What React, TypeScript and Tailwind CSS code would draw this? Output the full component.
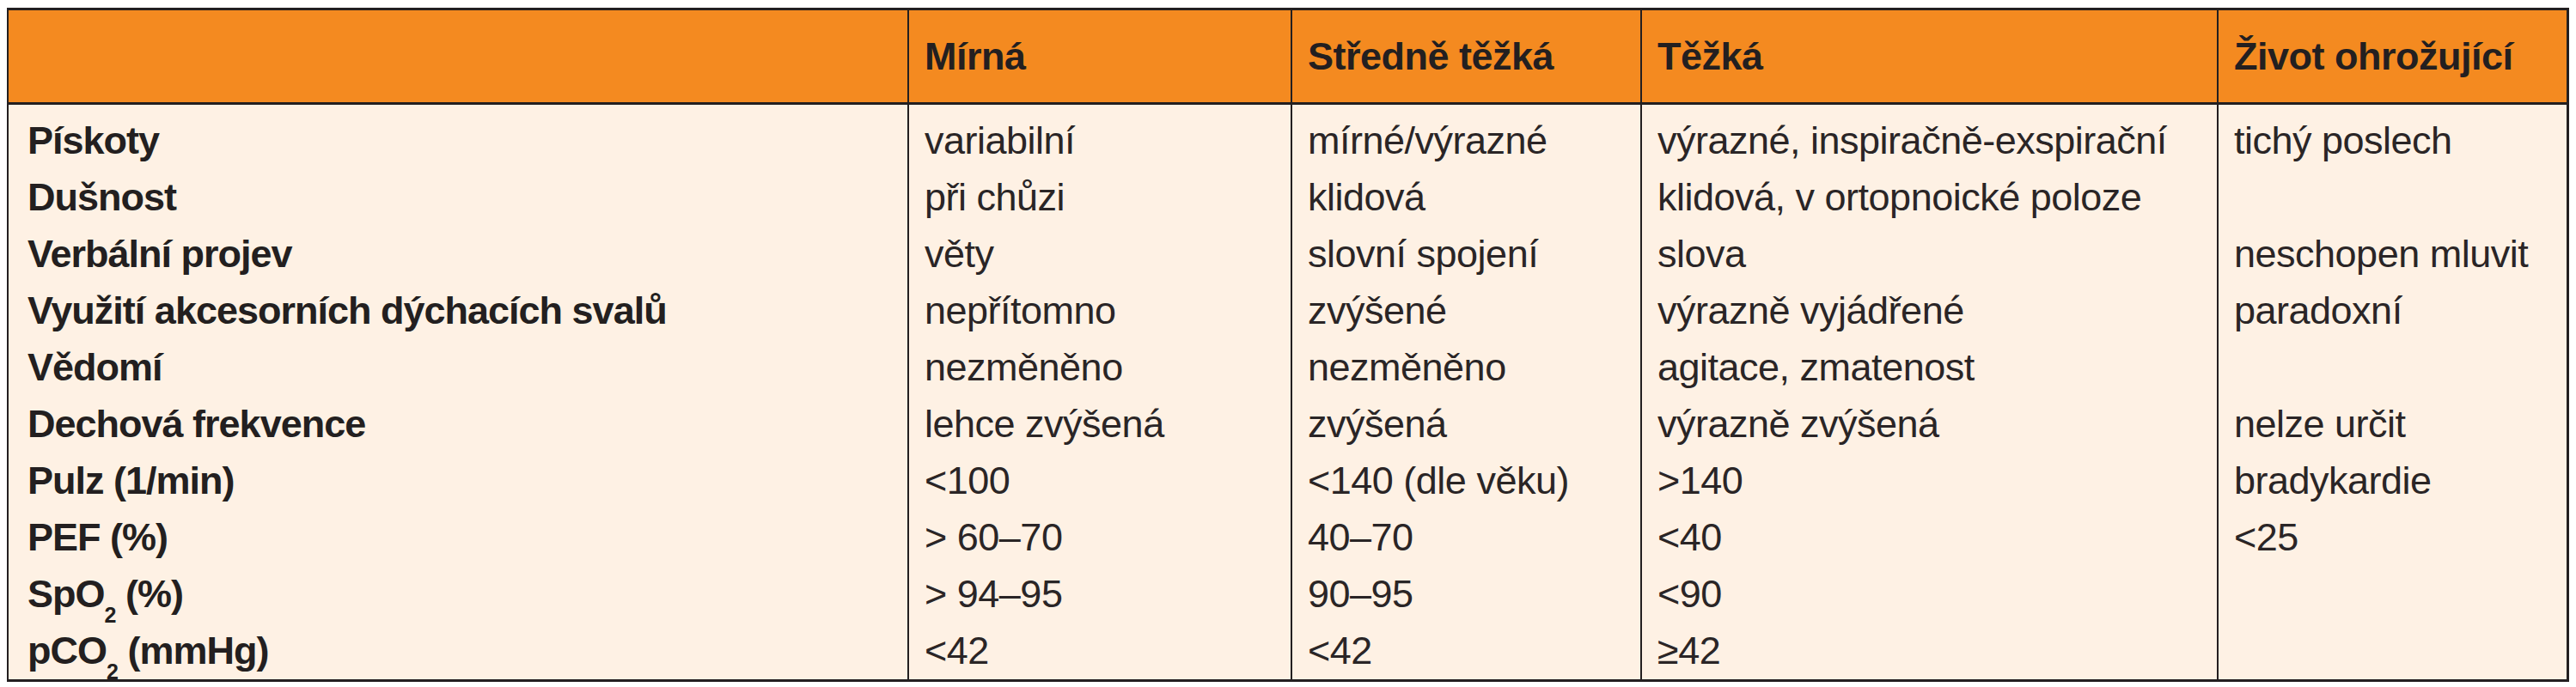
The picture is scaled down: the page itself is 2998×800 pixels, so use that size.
import React from "react";

type Row = { label: React.ReactNode; cells: string[] };

const Sub = ({ children }: { children: React.ReactNode }) => (
  <sub className="text-[25px] leading-none relative bottom-[-18px] align-baseline">{children}</sub>
);

const rows: Row[] = [
  { label: "Pískoty", cells: ["variabilní", "mírné/výrazné", "výrazné, inspiračně-exspirační", "tichý poslech"] },
  { label: "Dušnost", cells: ["při chůzi", "klidová", "klidová, v ortopnoické poloze", ""] },
  { label: "Verbální projev", cells: ["věty", "slovní spojení", "slova", "neschopen mluvit"] },
  { label: "Využití akcesorních dýchacích svalů", cells: ["nepřítomno", "zvýšené", "výrazně vyjádřené", "paradoxní"] },
  { label: "Vědomí", cells: ["nezměněno", "nezměněno", "agitace, zmatenost", ""] },
  { label: "Dechová frekvence", cells: ["lehce zvýšená", "zvýšená", "výrazně zvýšená", "nelze určit"] },
  { label: "Pulz (1/min)", cells: ["<100", "<140 (dle věku)", ">140", "bradykardie"] },
  { label: "PEF (%)", cells: ["> 60–70", "40–70", "<40", "<25"] },
  {
    label: (
      <>
        SpO<Sub>2</Sub> (%)
      </>
    ),
    cells: ["> 94–95", "90–95", "<90", ""],
  },
  {
    label: (
      <>
        pCO<Sub>2</Sub> (mmHg)
      </>
    ),
    cells: ["<42", "<42", "≥42", ""],
  },
];

const headers = ["Mírná", "Středně těžká", "Těžká", "Život ohrožující"];

const cols = "grid grid-cols-[1046px_446px_407px_671px_1fr]";

export default function App() {
  return (
    <div className="w-[2998px] h-[800px] bg-white pt-[9px] pl-[8px] font-['Liberation_Sans',Arial,sans-serif]">
      <div className="w-[2982px] border-t-[3px] border-b-[3px] border-l-2 border-r-[3px] border-[#231f20]">
        {/* header */}
        <div className={`${cols} h-[110px] bg-[#f48a20] border-b-[3px] border-[#231f20]`}>
          <div />
          {headers.map((h) => (
            <div
              key={h}
              className="border-l-2 border-[#231f20] pl-[18px] flex items-center text-[45px] font-bold tracking-[-0.5px] text-[#231f20]"
            >
              {h}
            </div>
          ))}
        </div>

        {/* body */}
        <div className="bg-[#fef1e4]">
          {rows.map((r, i) => (
            <div key={i} className={`${cols} leading-[66px] text-[45px] tracking-[-0.5px]`}>
              <div
                className={`pl-[22px] font-bold tracking-[-1px] text-[#231f20] whitespace-nowrap ${i === 0 ? "pt-[9px]" : ""}`}
              >
                {r.label}
              </div>
              {r.cells.map((c, j) => (
                <div
                  key={j}
                  className={`border-l-2 border-[#231f20] pl-[18px] text-[#2a2526] whitespace-nowrap ${i === 0 ? "pt-[9px]" : ""}`}
                >
                  {c}
                </div>
              ))}
            </div>
          ))}
        </div>
      </div>
    </div>
  );
}
